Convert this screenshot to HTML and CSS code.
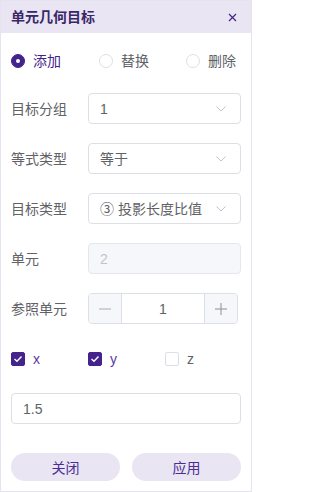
FILE: index.html
```html
<!DOCTYPE html>
<html lang="zh">
<head>
<meta charset="utf-8">
<title>单元几何目标</title>
<link rel="stylesheet" href="styles.css">
</head>
<body>
<div class="panel">
  <div class="header">
    <span class="title">单元几何目标</span>
    <svg class="close" width="9" height="9" viewBox="0 0 9 9"><path d="M1 1L8 8M8 1L1 8" stroke="#45238c" stroke-width="1.2" fill="none"/></svg>
  </div>
  <div class="body">
    <div class="radios">
      <label class="radio checked"><span class="dot"></span><span>添加</span></label>
      <label class="radio"><span class="dot"></span><span>替换</span></label>
      <label class="radio"><span class="dot"></span><span>删除</span></label>
    </div>

    <div class="row first">
      <span class="label">目标分组</span>
      <div class="control select"><span>1</span><svg class="chev" width="10" height="6" viewBox="0 0 10 6"><path d="M0.5 0.5L5 5L9.5 0.5" stroke="#c0c4cc" stroke-width="1" fill="none"/></svg></div>
    </div>
    <div class="row">
      <span class="label">等式类型</span>
      <div class="control select"><span>等于</span><svg class="chev" width="10" height="6" viewBox="0 0 10 6"><path d="M0.5 0.5L5 5L9.5 0.5" stroke="#c0c4cc" stroke-width="1" fill="none"/></svg></div>
    </div>
    <div class="row">
      <span class="label">目标类型</span>
      <div class="control select"><span>③ 投影长度比值</span><svg class="chev" width="10" height="6" viewBox="0 0 10 6"><path d="M0.5 0.5L5 5L9.5 0.5" stroke="#c0c4cc" stroke-width="1" fill="none"/></svg></div>
    </div>
    <div class="row">
      <span class="label">单元</span>
      <div class="control disabled"><span>2</span></div>
    </div>
    <div class="row">
      <span class="label">参照单元</span>
      <div class="number">
        <span class="step minus"><svg width="14" height="14" viewBox="0 0 14 14"><path d="M1 7H13" stroke="#a8abb2" stroke-width="1"/></svg></span>
        <span class="value">1</span>
        <span class="step plus"><svg width="14" height="14" viewBox="0 0 14 14"><path d="M1 7H13M7 1V13" stroke="#8d9095" stroke-width="1"/></svg></span>
      </div>
    </div>

    <div class="checks">
      <label class="check checked"><span class="box"><svg width="10" height="8" viewBox="0 0 10 8"><path d="M1.5 4L4 6.3L8.5 1.5" stroke="#fff" stroke-width="1.4" fill="none"/></svg></span><span>x</span></label>
      <label class="check checked"><span class="box"><svg width="10" height="8" viewBox="0 0 10 8"><path d="M1.5 4L4 6.3L8.5 1.5" stroke="#fff" stroke-width="1.4" fill="none"/></svg></span><span>y</span></label>
      <label class="check"><span class="box"></span><span>z</span></label>
    </div>

    <div class="control field"><span>1.5</span></div>

    <div class="buttons">
      <button class="btn">关闭</button>
      <button class="btn">应用</button>
    </div>
  </div>
</div>
</body>
</html>
```
FILE: styles.css
```css
* { box-sizing: border-box; }
html, body { margin: 0; padding: 0; background: #fff; }
body {
  font-family: "Liberation Sans", "Noto Sans CJK SC", sans-serif;
  font-size: 14px;
  color: #606266;
}
.panel {
  width: 252px;
  height: 492px;
  border: 1px solid #e6e2f0;
  display: flex;
  flex-direction: column;
}
.header {
  height: 32px;
  background: #e9e5f3;
  display: flex;
  align-items: center;
  justify-content: space-between;
  padding: 0 14px 0 10px;
}
.title {
  font-weight: bold;
  color: #3a2768;
  font-size: 14px;
  line-height: 20px;
}
.close { display: block; }
.body {
  padding: 18px 10px 10px 10px;
  display: flex;
  flex-direction: column;
  flex: 1;
}
.radios {
  display: grid;
  grid-template-columns: 88px 87px auto;
  height: 20px;
  align-items: center;
}
.radio {
  display: flex;
  align-items: center;
  gap: 8px;
  line-height: 20px;
}
.radio .dot {
  width: 14px;
  height: 14px;
  border-radius: 50%;
  border: 1px solid #dcdfe6;
  background: #fff;
  position: relative;
}
.radio.checked { color: #45238c; }
.radio.checked .dot {
  border-color: #45238c;
  background: #45238c;
}
.radio.checked .dot::after {
  content: "";
  position: absolute;
  left: 4px;
  top: 4px;
  width: 4px;
  height: 4px;
  border-radius: 50%;
  background: #fff;
}
.row {
  display: flex;
  align-items: center;
  height: 31px;
  margin-top: 19px;
}
.row.first { margin-top: 22px; }
.label {
  width: 77px;
  flex: none;
  line-height: 20px;
}
.control {
  display: flex;
  align-items: center;
  justify-content: space-between;
  height: 31px;
  width: 153px;
  border: 1px solid #dcdfe6;
  border-radius: 4px;
  padding: 0 14px 0 11px;
  background: #fff;
  line-height: 20px;
}
.control.disabled {
  background: #f5f7fa;
  color: #c0c4cc;
  border-color: #e4e7ed;
}
.chev { display: block; }
.number {
  display: flex;
  height: 31px;
  width: 150px;
  border: 1px solid #dcdfe6;
  border-radius: 4px;
  overflow: hidden;
}
.step {
  width: 33px;
  flex: none;
  background: #f5f7fa;
  display: flex;
  align-items: center;
  justify-content: center;
}
.step svg { display: block; }
.minus { border-right: 1px solid #dcdfe6; }
.plus { border-left: 1px solid #dcdfe6; }
.value {
  flex: 1;
  display: flex;
  align-items: center;
  justify-content: center;
  color: #606266;
}
.checks {
  display: grid;
  grid-template-columns: 77px 77px auto;
  height: 20px;
  align-items: center;
  margin-top: 25px;
}
.check {
  display: flex;
  align-items: center;
  gap: 8px;
  line-height: 20px;
}
.check .box {
  width: 14px;
  height: 14px;
  border: 1px solid #dcdfe6;
  border-radius: 2px;
  background: #fff;
  display: flex;
  align-items: center;
  justify-content: center;
}
.check.checked { color: #5a3aa0; }
.check.checked .box {
  background: #45238c;
  border-color: #45238c;
}
.check .box svg { display: block; }
.field {
  width: 230px;
  margin-top: 24px;
}
.buttons {
  display: flex;
  gap: 12px;
  margin-top: 29px;
}
.btn {
  flex: 1;
  height: 28px;
  border: none;
  border-radius: 14px;
  background: #e9e5f3;
  color: #4d2d95;
  font-family: "Liberation Sans", "Noto Sans CJK SC", sans-serif;
  font-size: 14px;
  padding: 0;
}
```
